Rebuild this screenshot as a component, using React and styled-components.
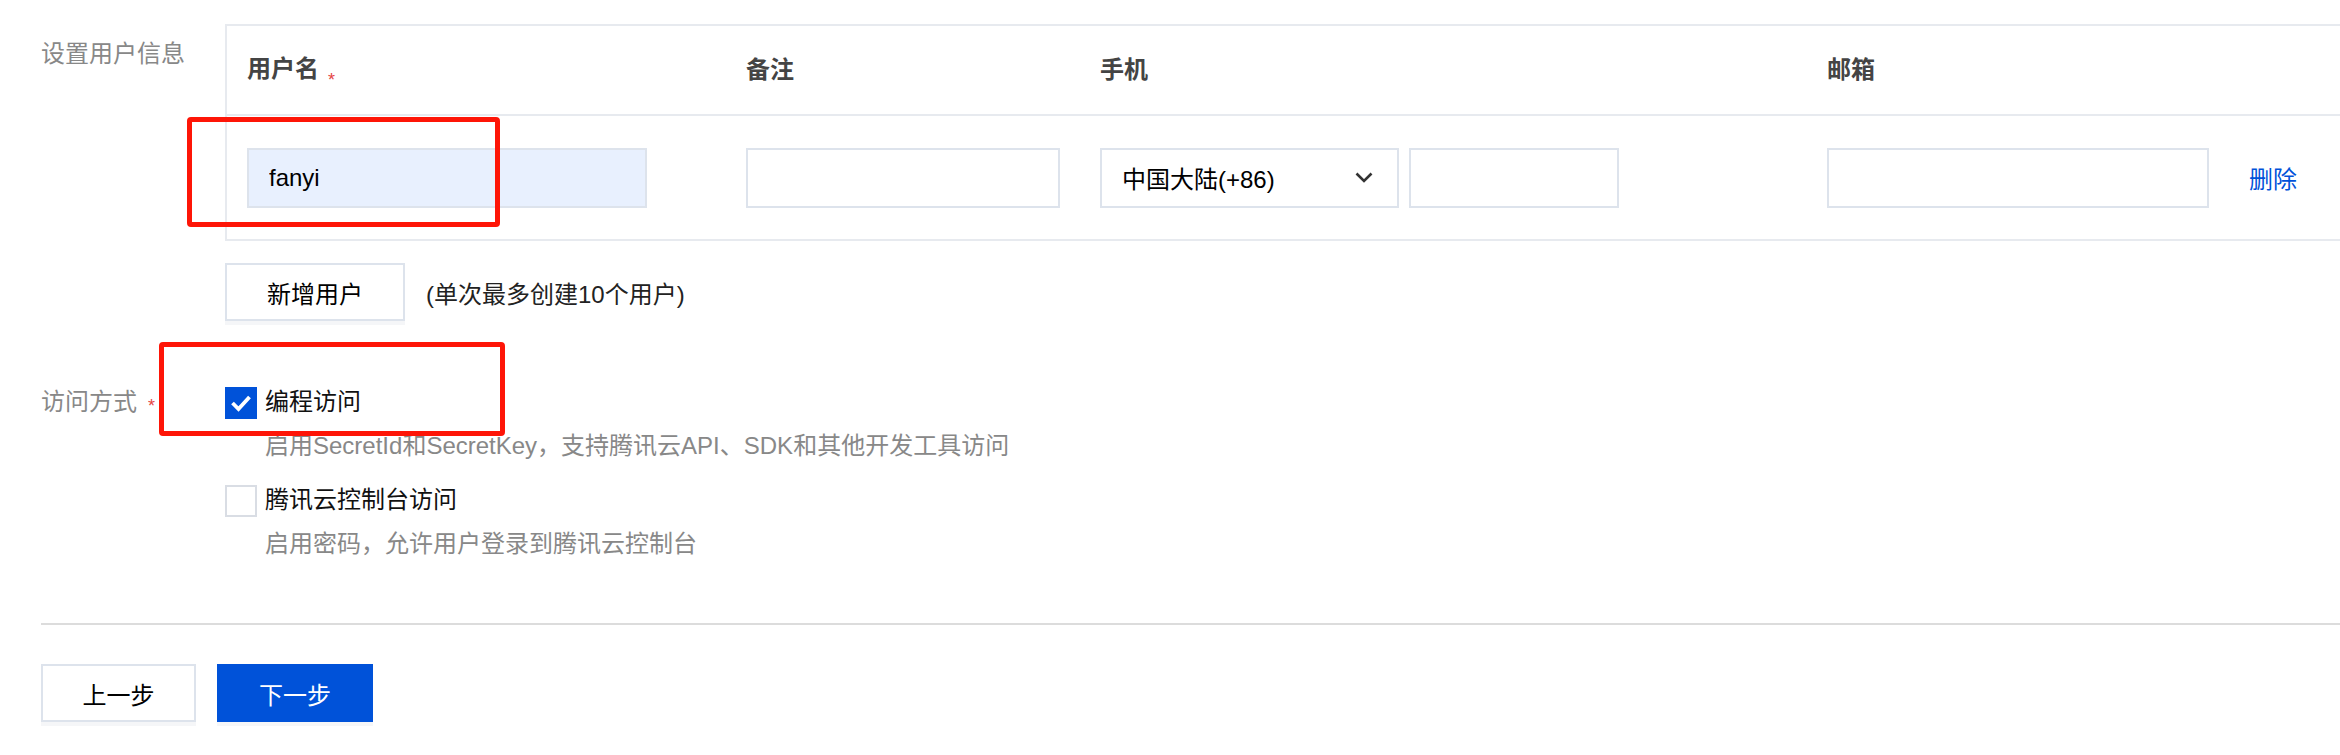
import styled, { createGlobalStyle } from "styled-components";

const GlobalStyle = createGlobalStyle`
  html, body {
    margin: 0;
    padding: 0;
    background: #fff;
  }
  body {
    font-family: "Liberation Sans", "Noto Sans CJK SC", sans-serif;
    font-size: 24px;
    color: #000;
  }
`;

const Page = styled.div`
  position: relative;
  width: 100vw;
  height: 755px;
  overflow: hidden;
  padding: 24px 0 0 41px;
  box-sizing: border-box;
`;

const FormRow = styled.div`
  display: flex;
  align-items: flex-start;
  margin-top: ${(p) => p.$gap || 0}px;
`;

const Label = styled.div`
  width: 184px;
  flex-shrink: 0;
  padding-top: ${(p) => p.$top || 0}px;
  line-height: 36px;
  color: #888;
  white-space: nowrap;
`;

const Star = styled.span`
  display: inline-block;
  margin-left: ${(p) => p.$space || 10}px;
  font-size: 18px;
  font-weight: 400;
  line-height: 1;
  color: #e54545;
  vertical-align: ${(p) => p.$drop || 0}px;
`;

const Field = styled.div`
  flex: 1;
  min-width: 0;
`;

const Table = styled.div`
  border: 2px solid #e7eaef;
  border-right: none;
`;

const Row = styled.div`
  display: grid;
  grid-template-columns: 499px 354px 727px 422px 1fr;
  align-items: center;
  height: ${(p) => (p.$head ? 88 : 123)}px;
  border-bottom: ${(p) => (p.$head ? "2px solid #e7eaef" : "none")};
`;

const Cell = styled.div`
  display: flex;
  align-items: center;
  padding: 0 20px;
  white-space: nowrap;
`;

const HeadText = styled.span`
  font-weight: 700;
  color: #444;
  line-height: 36px;
`;

const Input = styled.input`
  box-sizing: border-box;
  width: ${(p) => p.$width}px;
  height: 60px;
  margin: 0 0 0 ${(p) => p.$offset || 0}px;
  padding: 0 20px;
  border: 2px solid #dde3ec;
  border-radius: 0;
  background: ${(p) => p.$fill || "#fff"};
  font: inherit;
  color: #000;
  outline: none;
`;

const Select = styled.div`
  box-sizing: border-box;
  display: flex;
  align-items: center;
  justify-content: space-between;
  width: 299px;
  height: 60px;
  padding: 0 24px 0 20px;
  border: 2px solid #dde3ec;
  color: #000;
`;

const LinkText = styled.span`
  color: #0052d9;
  cursor: pointer;
`;

const AddLine = styled.div`
  display: flex;
  align-items: center;
  margin-top: 22px;
`;

const Button = styled.button`
  box-sizing: border-box;
  width: ${(p) => p.$width}px;
  height: 58px;
  padding: 0;
  border: 2px solid ${(p) => (p.$primary ? "#0052d9" : "#dde3ec")};
  border-radius: 0;
  background: ${(p) => (p.$primary ? "#0052d9" : "#fff")};
  color: ${(p) => (p.$primary ? "#fff" : "#000")};
  font: inherit;
  box-shadow: 0 4px 0 #f5f6f8;
  cursor: pointer;
`;

const Hint = styled.span`
  margin-left: 21px;
  color: #222;
`;

const Options = styled.div`
  display: flex;
  flex-direction: column;
`;

const Option = styled.div`
  margin-top: ${(p) => p.$gap || 0}px;
`;

const OptionTitle = styled.label`
  display: flex;
  align-items: center;
  gap: 8px;
  line-height: 36px;
  color: #111;
`;

const Box = styled.span`
  box-sizing: border-box;
  display: flex;
  align-items: center;
  justify-content: center;
  width: 32px;
  height: 32px;
  margin-top: 2px;
  border: 2px solid ${(p) => (p.$checked ? "#0052d9" : "#d9dde4")};
  background: ${(p) => (p.$checked ? "#0052d9" : "#fff")};
`;

const Desc = styled.div`
  margin-top: 8px;
  padding-left: 40px;
  line-height: 36px;
  color: #888;
`;

const Divider = styled.div`
  height: 2px;
  margin-top: 61px;
  background: #dcdcdc;
`;

const Footer = styled.div`
  display: flex;
  gap: 21px;
  margin-top: 39px;
`;

const Highlight = styled.div`
  position: absolute;
  box-sizing: border-box;
  border: 5px solid #fe1507;
  border-radius: 4px;
  pointer-events: none;
`;

function Chevron() {
  return (
    <svg width="18" height="11" viewBox="0 0 18 11">
      <polyline
        points="1.5,1.5 9,9 16.5,1.5"
        fill="none"
        stroke="#333"
        strokeWidth="2.6"
      />
    </svg>
  );
}

function Check() {
  return (
    <svg width="22" height="18" viewBox="0 0 22 18">
      <polyline
        points="2.5,9 8.5,15 19.5,3"
        fill="none"
        stroke="#fff"
        strokeWidth="3.8"
      />
    </svg>
  );
}

function Checkbox({ checked, title, desc, gap }) {
  return (
    <Option $gap={gap}>
      <OptionTitle>
        <Box $checked={checked}>{checked && <Check />}</Box>
        {title}
      </OptionTitle>
      <Desc>{desc}</Desc>
    </Option>
  );
}

export default function App() {
  return (
    <>
      <GlobalStyle />
      <Page>
        <FormRow>
          <Label $top={12}>设置用户信息</Label>
          <Field>
            <Table>
              <Row $head>
                <Cell>
                  <HeadText>
                    用户名
                    <Star $space={9} $drop={-9}>*</Star>
                  </HeadText>
                </Cell>
                <Cell>
                  <HeadText>备注</HeadText>
                </Cell>
                <Cell>
                  <HeadText>手机</HeadText>
                </Cell>
                <Cell>
                  <HeadText>邮箱</HeadText>
                </Cell>
                <Cell />
              </Row>
              <Row>
                <Cell>
                  <Input $width={400} $fill="#e8f0fe" defaultValue="fanyi" />
                </Cell>
                <Cell>
                  <Input $width={314} />
                </Cell>
                <Cell>
                  <Select>
                    <span>中国大陆(+86)</span>
                    <Chevron />
                  </Select>
                  <Input $width={210} $offset={10} />
                </Cell>
                <Cell>
                  <Input $width={383} />
                </Cell>
                <Cell>
                  <LinkText>删除</LinkText>
                </Cell>
              </Row>
            </Table>
            <AddLine>
              <Button $width={180}>新增用户</Button>
              <Hint>(单次最多创建10个用户)</Hint>
            </AddLine>
          </Field>
        </FormRow>

        <FormRow $gap={63}>
          <Label>
            访问方式
            <Star $space={11} $drop={-2}>*</Star>
          </Label>
          <Options>
            <Checkbox
              checked
              title="编程访问"
              desc="启用SecretId和SecretKey，支持腾讯云API、SDK和其他开发工具访问"
            />
            <Checkbox
              gap={18}
              title="腾讯云控制台访问"
              desc="启用密码，允许用户登录到腾讯云控制台"
            />
          </Options>
        </FormRow>

        <Divider />

        <Footer>
          <Button $width={155}>上一步</Button>
          <Button $width={156} $primary>
            下一步
          </Button>
        </Footer>

        <Highlight style={{ left: 187, top: 117, width: 313, height: 110 }} />
        <Highlight style={{ left: 159, top: 342, width: 346, height: 94 }} />
      </Page>
    </>
  );
}
